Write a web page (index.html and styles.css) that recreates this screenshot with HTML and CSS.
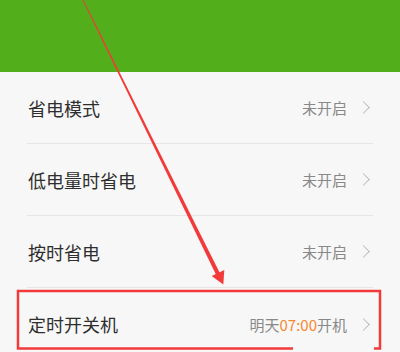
FILE: index.html
```html
<!DOCTYPE html>
<html lang="zh-CN">
<head>
  <meta charset="UTF-8">
  <meta name="viewport" content="width=device-width, initial-scale=1.0">
  <title>省电</title>
  <link rel="stylesheet" href="styles.css">
</head>
<body>

<div class="screen">
  <div class="header"></div>

  <div class="list">
    <div class="row">
      <span class="label">省电模式</span>
      <span class="status">未开启</span>
      <span class="chevron"></span>
    </div>
    <div class="row">
      <span class="label">低电量时省电</span>
      <span class="status">未开启</span>
      <span class="chevron"></span>
    </div>
    <div class="row">
      <span class="label">按时省电</span>
      <span class="status">未开启</span>
      <span class="chevron"></span>
    </div>
    <div class="row last">
      <span class="label">定时开关机</span>
      <span class="status">明天<em class="time">07:00</em>开机</span>
      <span class="chevron"></span>
    </div>
  </div>

  <!-- annotation drawn on top of the screenshot -->
  <svg class="markup" width="400" height="352" viewBox="0 0 400 352">
    <polygon points="82.5,0 83.5,0 219.8,273.1 216.2,274.9" fill="#f23a3a"/>
    <polygon points="224.3,269.9 211.7,276.1 223.3,284.5" fill="#f23a3a"/>
    <path d="M293 348.5 H18 V291 H380 V348.5 H374" fill="none" stroke="#f23a3a" stroke-width="2.5"/>
  </svg>
</div>

</body>
</html>
```

FILE: styles.css
```css
body {
  margin: 0;
  background-color: #f7f7f7;
  font-family: "Noto Sans CJK SC", "Noto Sans", sans-serif;
}

.screen {
  position: relative;
  width: 400px;
  height: 352px;
  overflow: hidden;
}

.header {
  height: 72px;
  background-color: #53ae1b;
}

.row {
  display: flex;
  align-items: center;
  height: 72px;
  margin: 0 27px 0 27px;
  padding-left: 1px;
  border-bottom: 1px solid #e6e6e6;
  box-sizing: border-box;
}

.row.last {
  border-bottom: none;
}

.label {
  flex: 1;
  font-size: 18px;
  color: #2e2e2e;
}

.status {
  font-size: 15px;
  color: #888;
}

.time {
  font-style: normal;
  color: #f7882f;
}

.chevron {
  width: 8px;
  height: 8px;
  margin: 0 5px 0 12px;
  border-top: 1px solid #bdbdbd;
  border-right: 1px solid #bdbdbd;
  transform: rotate(45deg);
}

.markup {
  position: absolute;
  left: 0;
  top: 0;
}
```
